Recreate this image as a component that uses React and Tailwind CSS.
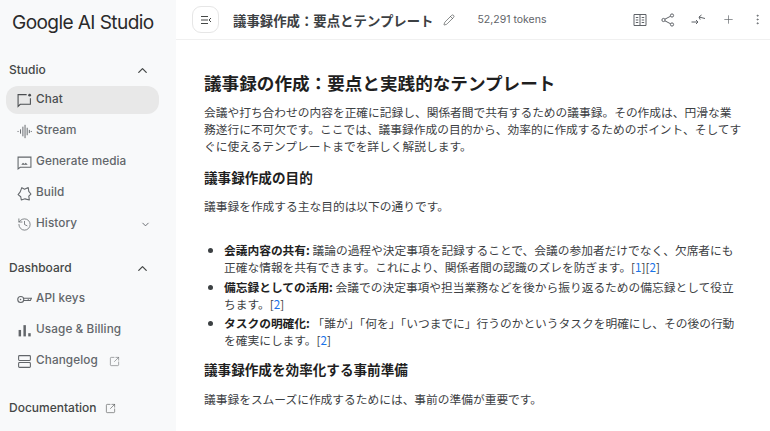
import { ChevronUp, ChevronDown, History, SquareArrowOutUpRight, Pencil, Plus, EllipsisVertical } from "lucide-react";

const ChatIcon = () => (
  <svg width="15" height="15" viewBox="0 0 14 14" fill="none" stroke="currentColor" strokeWidth="1">
    <path d="M9 1.5H1v11l2-2h9.5V5" />
    <circle cx="11.8" cy="2" r="1.3" fill="currentColor" stroke="none" />
  </svg>
);

const StreamIcon = () => (
  <svg width="15" height="15" viewBox="0 0 14 14" fill="none" stroke="currentColor" strokeWidth="0.9">
    <path d="M1 6.5v1M3.3 5v4M5.5 2.5v9M7.5 0.8v12.4M9.5 3.5v7M11.5 5.5v3M13.3 6.5v1" />
  </svg>
);

const MediaIcon = () => (
  <svg width="15" height="15" viewBox="0 0 14 14" fill="none" stroke="currentColor" strokeWidth="1">
    <path d="M1 2h12v9.5H3l-2 1.5z" />
    <path d="M4 9l1.6-1.8L7 8.4l1.2-1.2L10 9z" fill="currentColor" stroke="none" />
  </svg>
);

const BuildIcon = () => (
  <svg width="15" height="15" viewBox="0 0 14 14" fill="none" stroke="currentColor" strokeWidth="1" strokeLinejoin="round">
    <path d="M4.5 1.5L7 3l3.5-1.5L11 5l2 2.5-2 2 .5 3.5-4-1-3.500 1-.5-3L1 8l2-2.500z" />
  </svg>
);

const KeyIcon = () => (
  <svg width="15" height="15" viewBox="0 0 14 14" fill="none" stroke="currentColor" strokeWidth="1">
    <circle cx="3.5" cy="7" r="2.8" />
    <path d="M6 5.8h7.5l-1 2.2h-1.2l-.8-.7-.8.7H6.2" />
    <circle cx="3.3" cy="7" r="0.7" fill="currentColor" stroke="none" />
  </svg>
);

const BarsIcon = () => (
  <svg width="15" height="15" viewBox="0 0 14 14" fill="currentColor">
    <rect x="1.5" y="6.5" width="2.3" height="6" />
    <rect x="6" y="2" width="2.3" height="10.5" />
    <rect x="10.5" y="9.5" width="2.3" height="3" />
  </svg>
);

const RowsIcon = () => (
  <svg width="15" height="15" viewBox="0 0 14 14" fill="none" stroke="currentColor" strokeWidth="1">
    <rect x="1.5" y="1.5" width="11" height="4.5" rx="0.8" />
    <rect x="1.5" y="8" width="11" height="4.5" rx="0.8" />
  </svg>
);

function NavItem({ icon: Icon, label, active, children }) {
  return (
    <div
      className={
        active
          ? "flex items-center h-[28px] ml-[6px] mr-[17px] pl-[11px] gap-[4px] rounded-[12px] bg-[#e8e8e8] text-[#4a4d50]"
          : "flex items-center h-[28px] ml-[6px] mr-[17px] pl-[11px] gap-[4px] text-[#62666a]"
      }
    >
      <span className="w-[15px] h-[15px] shrink-0 flex">
        <Icon />
      </span>
      <span className="text-[11.75px] font-medium tracking-[0.1px]">{label}</span>
      {children}
    </div>
  );
}

function Sidebar() {
  return (
    <aside className="w-[176px] shrink-0 h-full bg-[#f8f9fa] flex flex-col overflow-hidden" style={{ fontFamily: "Inter, sans-serif" }}>
      <div className="pl-[12px] pt-[9px] h-[59px] text-[19.1px] leading-[27px] tracking-[-0.6px] text-[#2a2a2a] whitespace-nowrap">
        Google AI Studio
      </div>
      <div className="flex items-center justify-between pl-[9px] pr-[26px] h-[22px] text-[12px] font-medium text-[#444746]">
        <span>Studio</span>
        <ChevronUp size={15} strokeWidth={2} />
      </div>
      <div className="flex flex-col gap-[3px] mt-[5px]">
        <NavItem icon={ChatIcon} label="Chat" active />
        <NavItem icon={StreamIcon} label="Stream" />
        <NavItem icon={MediaIcon} label="Generate media" />
        <NavItem icon={BuildIcon} label="Build" />
        <div className="relative">
          <NavItem icon={() => <History size={15} strokeWidth={1.25} />} label="History" />
          <ChevronDown size={11} strokeWidth={2} className="absolute right-[25px] top-[9px] text-[#5f6368]" />
        </div>
      </div>
      <div className="flex items-center justify-between pl-[9px] pr-[26px] h-[22px] mt-[19px] text-[12px] font-medium text-[#444746]">
        <span>Dashboard</span>
        <ChevronUp size={15} strokeWidth={2} />
      </div>
      <div className="flex flex-col gap-[3px] mt-[6px]">
        <NavItem icon={KeyIcon} label="API keys" />
        <NavItem icon={BarsIcon} label="Usage & Billing" />
        <NavItem icon={RowsIcon} label="Changelog">
          <SquareArrowOutUpRight size={11} strokeWidth={1.25} className="ml-[7px]" />
        </NavItem>
      </div>
      <div className="flex items-center gap-[8px] pl-[9px] mt-[24px] text-[12px] font-medium text-[#444746]">
        <span>Documentation</span>
        <SquareArrowOutUpRight size={11} strokeWidth={1.25} />
      </div>
    </aside>
  );
}

function Header() {
  return (
    <header className="h-[40px] shrink-0 flex items-center border-b border-[#f0f0f0] pl-[16px] pr-[6px] text-[#444746]">
      <button className="w-[27px] h-[27px] rounded-[9px] border border-[#e6e6e6] flex items-center justify-center shrink-0">
        <svg width="12" height="10" viewBox="0 0 12 10" fill="none" stroke="#444746" strokeWidth="1">
          <path d="M1 1.5h7M1 5h7M1 8.5h7M11 3L9 5l2 2" />
        </svg>
      </button>
      <span className="ml-[14px] text-[13.4px] leading-[18px] font-bold text-[#3c4043] whitespace-nowrap">議事録作成：要点とテンプレート</span>
      <Pencil size={12} strokeWidth={1.25} className="ml-[10px]" />
      <span className="ml-[22px] text-[10.5px] text-[#5f6368] whitespace-nowrap" style={{ fontFamily: "Inter, sans-serif" }}>52,291 tokens</span>
      <div className="ml-auto flex items-center gap-[16px] text-[#5f6368]">
        <svg width="14" height="14" viewBox="0 0 14 14" fill="none" stroke="currentColor" strokeWidth="1">
          <path d="M1 1.5h12v11H1zM7 1.5v11M2.8 4.5h2.5M2.8 7h2.5M2.8 9.5h2.5M8.7 4.5h2.5M8.7 7h2.5M8.7 9.5h2.5" />
        </svg>
        <svg width="14" height="14" viewBox="0 0 14 14" fill="none" stroke="currentColor" strokeWidth="1" className="-ml-[2px]">
          <circle cx="11" cy="2.5" r="1.6" />
          <circle cx="2.5" cy="7" r="1.6" />
          <circle cx="11" cy="11.5" r="1.6" />
          <path d="M3.9 6.2l5.7-3M3.9 7.8l5.7 3" />
        </svg>
        <svg width="15" height="14" viewBox="0 0 15 14" fill="none" stroke="currentColor" strokeWidth="1">
          <path d="M0.5 9h6.5M5 7l2 2-2 2M14 5.5L8 4M10.500 2L8 4l1.200 2.600" />
        </svg>
        <Plus size={13} strokeWidth={1.25} />
        <EllipsisVertical size={13} strokeWidth={1.5} />
      </div>
    </header>
  );
}

function Ref({ n }) {
  return <a className="text-[#1a73e8]">{n}</a>;
}

export default function App() {
  return (
    <div className="w-[770px] h-[431px] flex overflow-hidden bg-white" style={{ fontFamily: "'Noto Sans CJK JP', sans-serif" }}>
      <Sidebar />
      <main className="flex-1 min-w-0 flex flex-col">
        <Header />
        <div className="flex-1 overflow-hidden pl-[28px] pr-[24px] pt-[30px] text-[11.72px] leading-[17px] text-[#3c4043]">
          <h1 className="text-[17.6px] leading-[26px] font-bold text-[#1f1f1f]">議事録の作成：要点と実践的なテンプレート</h1>
          <p className="mt-[7px]">
            会議や打ち合わせの内容を正確に記録し、関係者間で共有するための議事録。その作成は、円滑な業<br />
            務遂行に不可欠です。ここでは、議事録作成の目的から、効率的に作成するためのポイント、そしてす<br />
            ぐに使えるテンプレートまでを詳しく解説します。
          </p>
          <h2 className="mt-[13px] text-[13.6px] leading-[20px] font-bold text-[#1f1f1f]">議事録作成の目的</h2>
          <p className="mt-[10px]">議事録を作成する主な目的は以下の通りです。</p>
          <ul className="mt-[27px] list-disc pl-[20px] flex flex-col gap-[2.5px]">
            <li>
              <b className="text-[#1f1f1f]">会議内容の共有:</b> 議論の過程や決定事項を記録することで、会議の参加者だけでなく、欠席者にも<br />
              正確な情報を共有できます。これにより、関係者間の認識のズレを防ぎます。[<Ref n="1" />][<Ref n="2" />]
            </li>
            <li>
              <b className="text-[#1f1f1f]">備忘録としての活用:</b> 会議での決定事項や担当業務などを後から振り返るための備忘録として役立<br />
              ちます。[<Ref n="2" />]
            </li>
            <li>
              <b className="text-[#1f1f1f]">タスクの明確化:</b> 「誰が」「何を」「いつまでに」行うのかというタスクを明確にし、その後の行動<br />
              を確実にします。[<Ref n="2" />]
            </li>
          </ul>
          <h2 className="mt-[11px] text-[13.6px] leading-[20px] font-bold text-[#1f1f1f]">議事録作成を効率化する事前準備</h2>
          <p className="mt-[11px]">議事録をスムーズに作成するためには、事前の準備が重要です。</p>
        </div>
      </main>
    </div>
  );
}
